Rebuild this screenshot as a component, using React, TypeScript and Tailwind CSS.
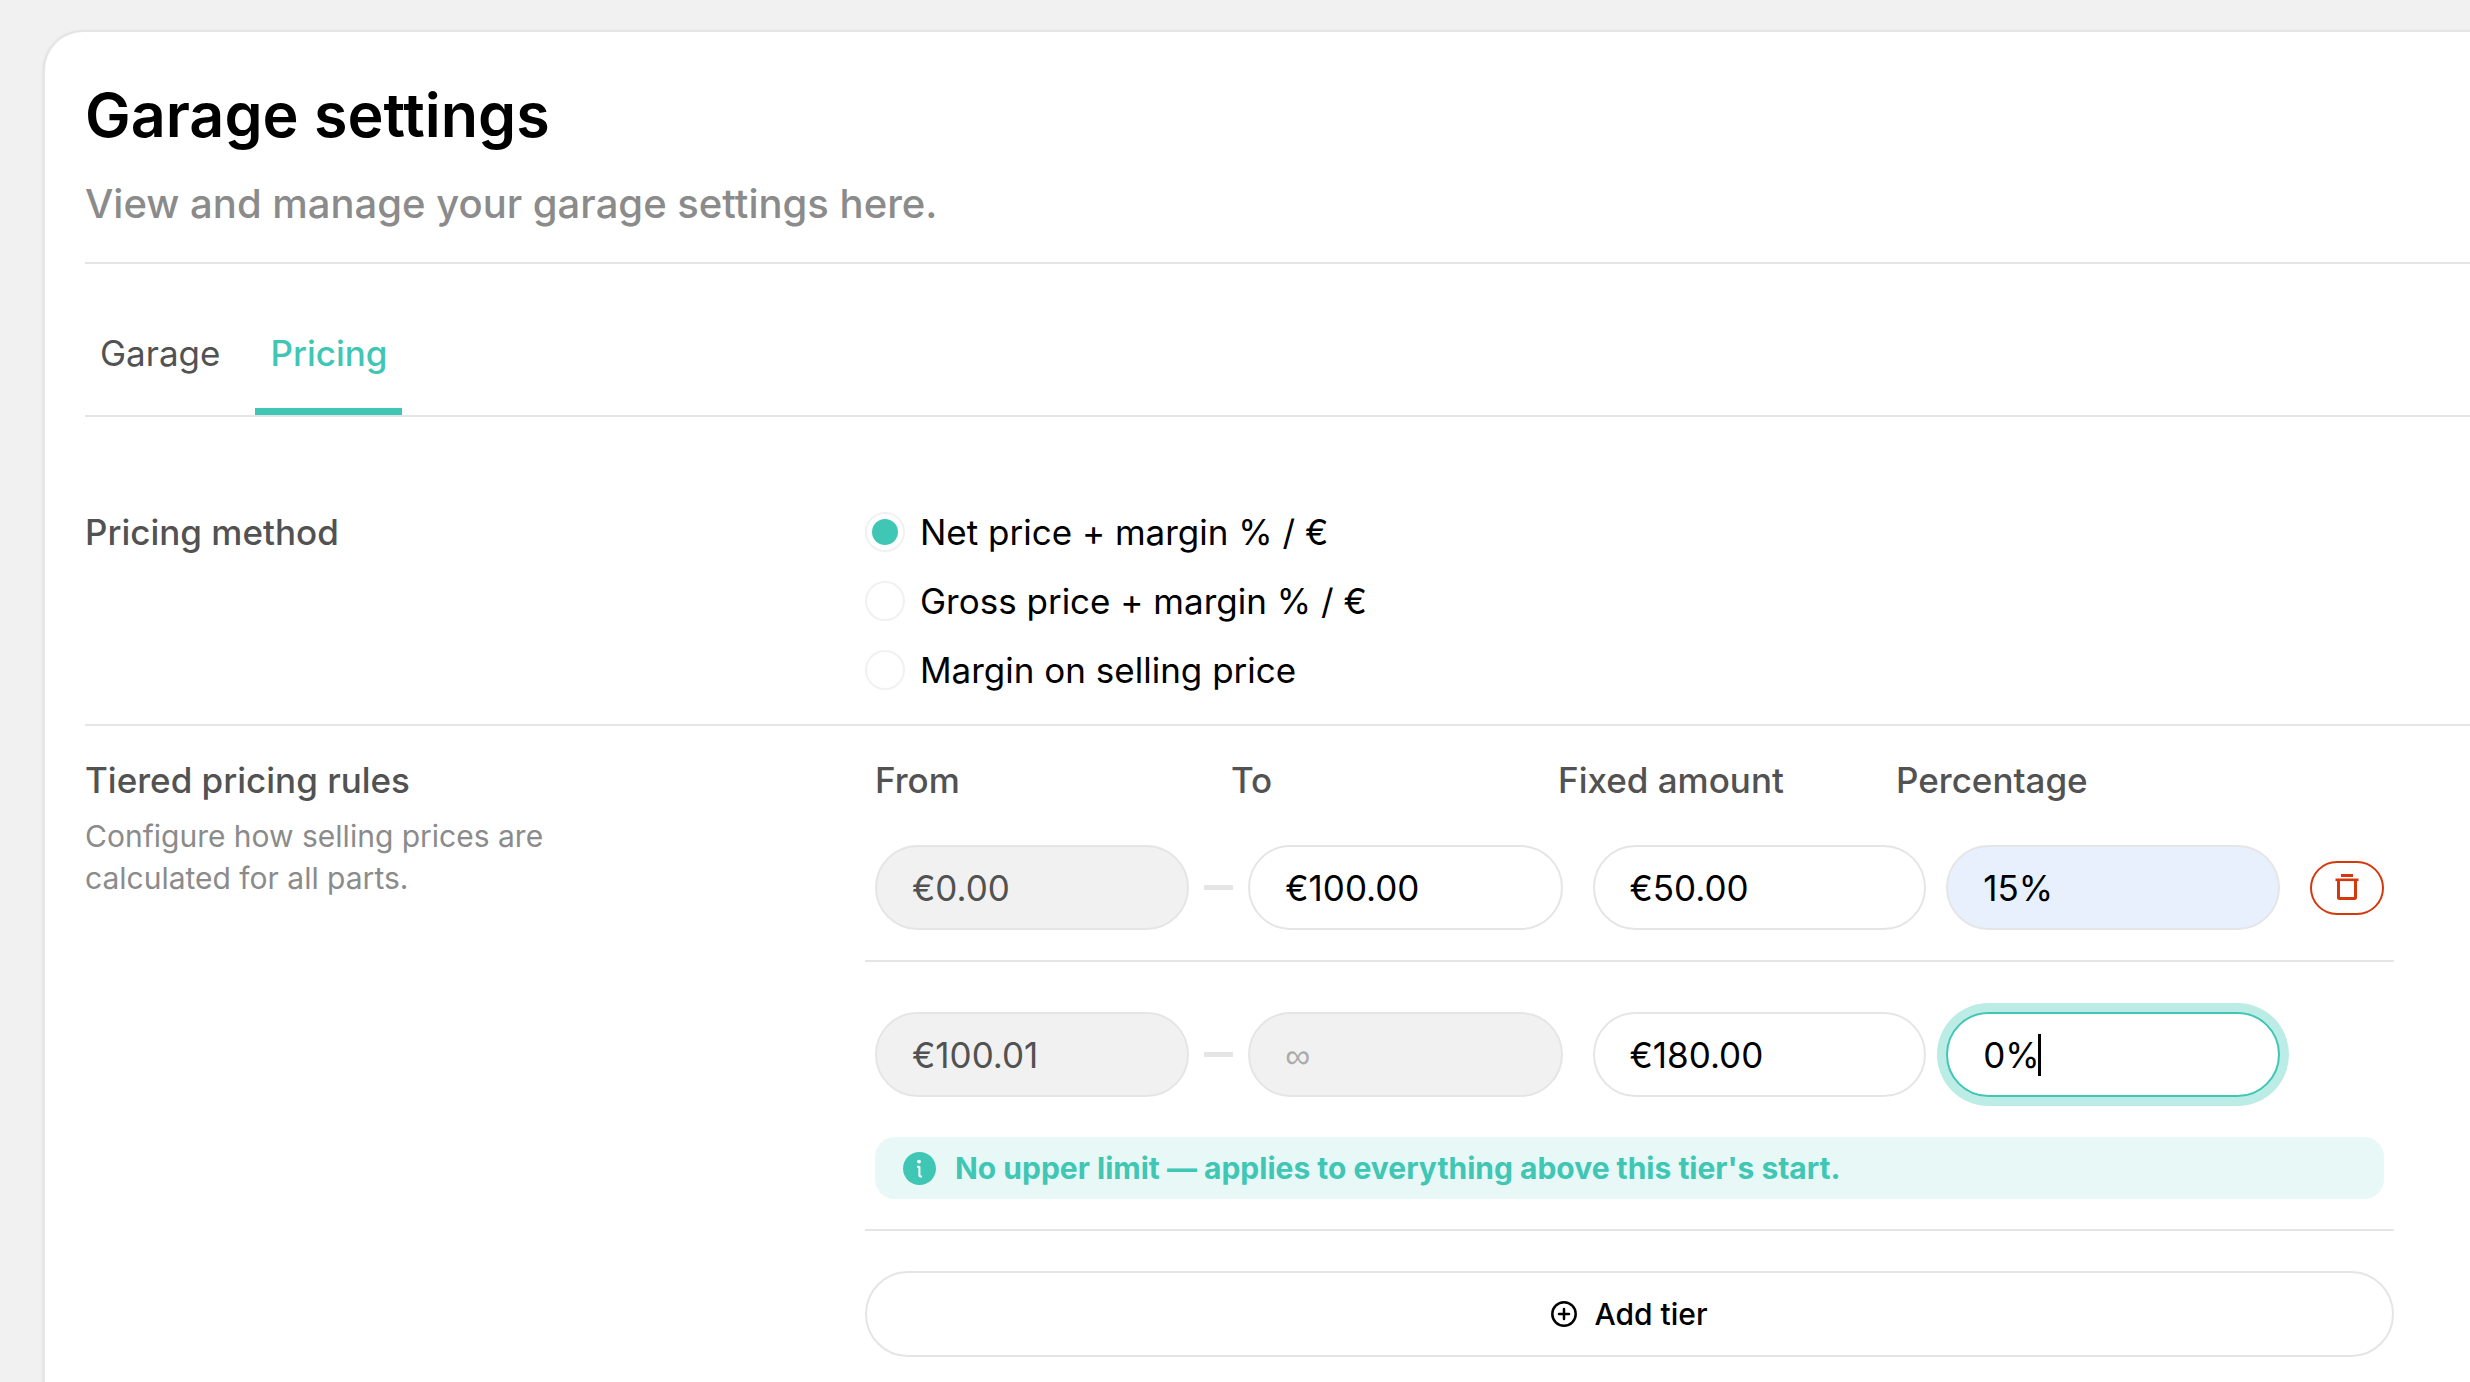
import React, { useState } from 'react';

const METHODS = [
    { id: 'net', label: 'Net price + margin % / €' },
    { id: 'gross', label: 'Gross price + margin % / €' },
    { id: 'selling', label: 'Margin on selling price' },
];

const COLUMNS = ['From', 'To', 'Fixed amount', 'Percentage'];

interface Tier {
    from: string;
    to: string;
    fixed: string;
    percentage: string;
}

const INITIAL_TIERS: Array<Tier> = [
    { from: '€0.00', to: '€100.00', fixed: '€50.00', percentage: '15%' },
    { from: '€100.01', to: '', fixed: '€180.00', percentage: '0%' },
];

const inputClass = "h-[85px] w-full min-w-0 rounded-full border-2 border-[#e5e5e5] bg-white px-[35px] text-[35px] text-black outline-none placeholder:font-['Liberation_Sans',sans-serif] placeholder:text-[#ababab] disabled:bg-[#f1f1f1] disabled:text-[#525252]";
const activeInputClass = "h-[85px] w-full min-w-0 rounded-full border-2 border-[#40c6b4] bg-white px-[35px] text-[35px] text-black caret-transparent outline-none ring-[9px] ring-[#bbece6]";
const filledInputClass = "h-[85px] w-full min-w-0 rounded-full border-2 border-[#e5e5e5] bg-[#e8f0fe] px-[35px] text-[35px] text-black outline-none";

const TrashIcon: React.FC = () => (
    <svg width="24" height="28" viewBox="0 0 24 28" fill="none" stroke="currentColor" aria-hidden="true">
        <path d="M6 1.5h12" strokeWidth="3" />
        <path d="M0.5 5.8h23" strokeWidth="2.6" />
        <path d="M3.5 5.8v17.7a1 1 0 0 0 1 1h15a1 1 0 0 0 1-1V5.8" strokeWidth="3" />
    </svg>
);

const InfoIcon: React.FC = () => (
    <svg width="33" height="33" viewBox="0 0 33 33" aria-hidden="true">
        <circle cx="16.5" cy="16.5" r="16.5" fill="currentColor" />
        <circle cx="16" cy="9.6" r="1.9" fill="#fff" />
        <path d="M14.8 14.8h1.6v8.2q0 1.6 1.8 1.6" fill="none" stroke="#fff" strokeWidth="2" strokeLinecap="round" strokeLinejoin="round" />
    </svg>
);

const PlusCircleIcon: React.FC = () => (
    <svg width="26" height="26" viewBox="0 0 26 26" fill="none" stroke="currentColor" strokeLinecap="round" aria-hidden="true">
        <circle cx="13" cy="13" r="11.7" strokeWidth="2.5" />
        <path d="M8 13h10M13 8v10" strokeWidth="2.5" />
    </svg>
);

interface TierRowProps {
    tier: Tier;
    index: number;
    last: boolean;
    onChange: (key: keyof Tier, value: string) => void;
    onRemove: () => void;
}

const TierRow: React.FC<TierRowProps> = ({ tier, index, last, onChange, onRemove }) => {
    return (
        <div className="flex items-center">
            <div className="flex min-w-0 flex-1 items-center gap-[15px]">
                <input className={inputClass} aria-label={`From, tier ${index + 1}`} value={tier.from} disabled />
                <span className="h-[5px] w-[29px] shrink-0 bg-[#e5e5e5]" />
                <input
                    className={inputClass}
                    aria-label={`To, tier ${index + 1}`}
                    value={tier.to}
                    placeholder="∞"
                    disabled={last}
                    onChange={(e) => onChange('to', e.target.value)}
                />
            </div>
            <div className="ml-[30px] grid min-w-0 flex-1 grid-cols-2 gap-5">
                <input
                    className={inputClass}
                    aria-label={`Fixed amount, tier ${index + 1}`}
                    value={tier.fixed}
                    onChange={(e) => onChange('fixed', e.target.value)}
                />
                <div className="relative">
                    <input
                        className={last ? activeInputClass : filledInputClass}
                        aria-label={`Percentage, tier ${index + 1}`}
                        value={tier.percentage}
                        onChange={(e) => onChange('percentage', e.target.value)}
                    />
                    {last && <span className="absolute top-[22px] left-[92px] h-[42px] w-[3px] bg-black" />}
                </div>
            </div>
            <div className="ml-[30px] w-[74px] shrink-0">
                {!last && (
                    <button
                        type="button"
                        aria-label="Delete tier"
                        className="flex h-[54px] w-full items-center justify-center rounded-full border-2 border-[#d4380d] text-[#d4380d]"
                        onClick={onRemove}
                    >
                        <TrashIcon />
                    </button>
                )}
            </div>
        </div>
    );
};

const App: React.FC = () => {
    const [method, setMethod] = useState('net');
    const [tiers, setTiers] = useState(INITIAL_TIERS);

    const updateTier = (index: number, key: keyof Tier, value: string) => {
        setTiers(tiers.map((tier, i) => (i === index ? { ...tier, [key]: value } : tier)));
    };

    return (
        <div className="min-h-screen overflow-hidden bg-[#f1f1f1] pt-[30px] pl-[43px] font-['Inter',sans-serif] text-[35px] leading-[54px] text-black">
            <main className="min-h-screen rounded-tl-[40px] border-t-2 border-l-2 border-[#e5e5e5] bg-white pt-[38px] pl-10 shadow-sm">
                <header className="border-b-2 border-[#e5e5e5] pb-[28px]">
                    <h1 className="text-[61px] leading-[90px] font-semibold">Garage settings</h1>
                    <p className="mt-3.5 text-[40px] leading-[60px] font-medium text-[#8b8b8b]">View and manage your garage settings here.</p>
                </header>

                <nav className="mt-[52px] flex gap-5 border-b-2 border-[#e5e5e5]">
                    <a href="#garage" className="px-[15px] pt-2.5 pb-[35px] text-[#525252]">Garage</a>
                    <a href="#pricing" className="border-b-[7px] border-[#40c6b4] px-[15px] pt-2.5 pb-7 font-medium text-[#40c6b4]">Pricing</a>
                </nav>

                <section className="mt-[88px] flex border-b-2 border-[#e5e5e5] pb-[27px]">
                    <h2 className="w-[780px] shrink-0 font-medium text-[#525252]">Pricing method</h2>
                    <div className="flex flex-col gap-[15px]">
                        {METHODS.map((m) => (
                            <label key={m.id} className="flex items-center gap-[15px]">
                                <input
                                    type="radio"
                                    name="method"
                                    className="size-10 appearance-none rounded-full border-2 border-[#f1f1f1] bg-clip-content p-[5px] checked:bg-[#40c6b4]"
                                    checked={method === m.id}
                                    onChange={() => setMethod(m.id)}
                                />
                                {m.label}
                            </label>
                        ))}
                    </div>
                </section>

                <section className="flex pt-[27px] pr-[76px]">
                    <div className="w-[780px] shrink-0">
                        <h2 className="font-medium text-[#525252]">Tiered pricing rules</h2>
                        <p className="mt-2 max-w-[500px] text-[30px] leading-[42px] text-[#8b8b8b]">Configure how selling prices are calculated for all parts.</p>
                    </div>
                    <div className="grow">
                        <div className="grid grid-cols-[356fr_327fr_338fr_488fr] px-2.5 font-medium text-[#525252]">
                            {COLUMNS.map((column) => (
                                <span key={column}>{column}</span>
                            ))}
                        </div>
                        {tiers.map((tier, index) => {
                            const last = index === tiers.length - 1;
                            return (
                                <div key={index} className={index === 0 ? "border-b-2 border-[#e5e5e5] px-2.5 pt-[38px] pb-[30px]" : "border-b-2 border-[#e5e5e5] px-2.5 pt-[50px] pb-[30px]"}>
                                    <TierRow
                                        tier={tier}
                                        index={index}
                                        last={last}
                                        onChange={(key, value) => updateTier(index, key, value)}
                                        onRemove={() => setTiers(tiers.filter((_, i) => i !== index))}
                                    />
                                    {last && (
                                        <p className="mt-10 flex h-[62px] items-center gap-[19px] rounded-[20px] bg-[#e7f8f6] px-7 text-[30px] font-bold text-[#40c6b4]">
                                            <InfoIcon />
                                            No upper limit — applies to everything above this tier's start.
                                        </p>
                                    )}
                                </div>
                            );
                        })}
                        <button
                            type="button"
                            className="mt-10 flex h-[86px] w-full items-center justify-center gap-[17px] rounded-full border-2 border-[#e5e5e5] text-[30px] font-medium"
                            onClick={() => setTiers([...tiers, { from: '', to: '', fixed: '', percentage: '' }])}
                        >
                            <PlusCircleIcon />
                            Add tier
                        </button>
                    </div>
                </section>
            </main>
        </div>
    );
};

export default App;
